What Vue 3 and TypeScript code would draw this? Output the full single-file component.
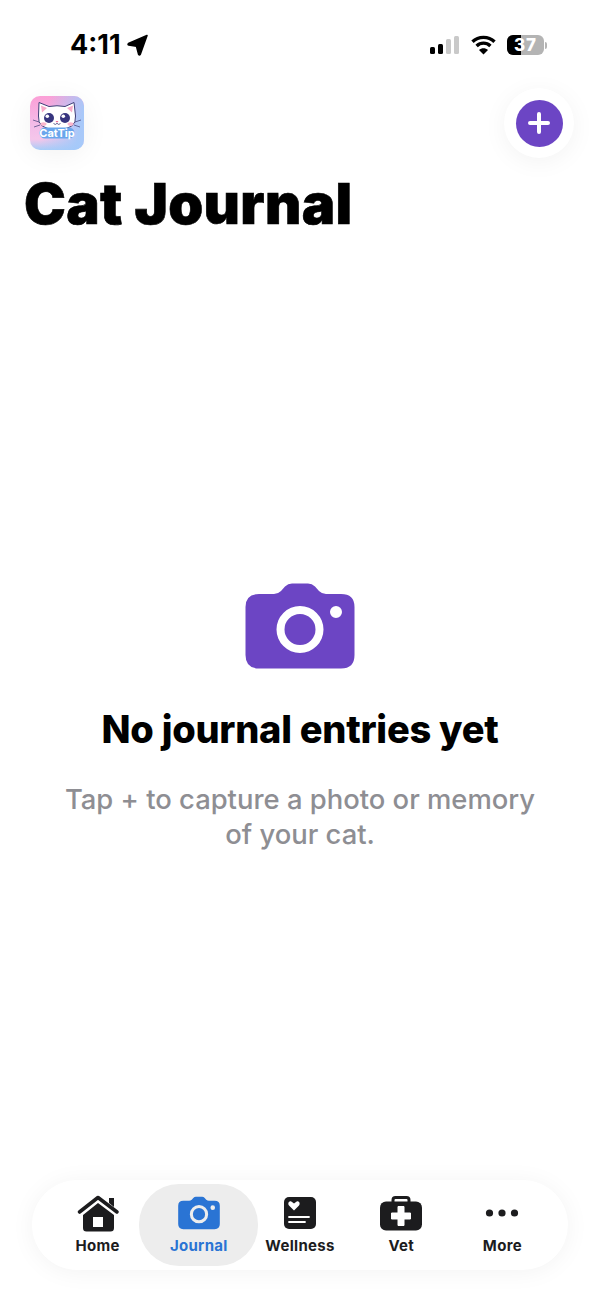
<script setup lang="ts">
const tabs = [
  { key: 'home', label: 'Home' },
  { key: 'journal', label: 'Journal' },
  { key: 'wellness', label: 'Wellness' },
  { key: 'vet', label: 'Vet' },
  { key: 'more', label: 'More' },
]
const active = 'journal'
</script>

<template>
  <div class="screen">
    <div class="status">
      <div class="time">
        <span>4:11</span>
        <svg width="23" height="22" viewBox="0 0 22 22"><path d="M20.5 1.5 L2 9.6 Q1 10.4 2.2 10.9 L10 12.2 L12.2 20.5 Q13 21.4 13.7 20.4 Z" fill="#000" stroke="#000" stroke-width="1.6" stroke-linejoin="round" /></svg>
      </div>
      <div class="status-right">
        <svg width="29" height="18" viewBox="0 0 29 18">
          <rect x="0" y="11" width="5" height="7" rx="1.500" fill="#000" />
          <rect x="8" y="8" width="5" height="10" rx="1.500" fill="#000" />
          <rect x="16" y="3" width="5" height="15" rx="1.500" fill="#c9c9c9" />
          <rect x="24" y="0" width="5" height="18" rx="1.500" fill="#c9c9c9" />
        </svg>
        <svg width="25" height="20" viewBox="0 0 25 20" fill="none" stroke="#000" stroke-width="3.400">
          <path d="M1.500 6.800 C7.500 .9 17.500 .9 23.500 6.800" />
          <path d="M5.600 11 C9.600 7.200 15.400 7.200 19.400 11" />
          <path d="M12.500 19.500 L8 15 C10.500 12.800 14.500 12.800 17 15 Z" fill="#000" stroke="none" />
        </svg>
        <div class="battery">
          <div class="battery-fill"></div>
          <span>37</span>
        </div>
        <div class="battery-cap"></div>
      </div>
    </div>

    <header class="top">
      <div class="logo-wrap">
        <svg class="logo" width="54" height="54" viewBox="0 0 54 54">
          <defs>
            <linearGradient id="logoBg" x1="0" y1="0" x2="0" y2="1">
              <stop offset="0" stop-color="#fb9fd6" />
              <stop offset="0.55" stop-color="#f3bde9" />
              <stop offset="0.8" stop-color="#f5c6ea" />
              <stop offset="1" stop-color="#a6cdf8" />
            </linearGradient>
            <linearGradient id="logoSide" x1="0" y1="0" x2="1" y2="0.200">
              <stop offset="0.35" stop-color="#a4c9fa" stop-opacity="0" />
              <stop offset="1" stop-color="#a4c9fa" stop-opacity=".95" />
            </linearGradient>
          </defs>
          <rect width="54" height="54" rx="10" fill="url(#logoBg)" />
          <rect width="54" height="54" rx="10" fill="url(#logoSide)" />
          <path d="M9 6.500 L19 10.500 Q27 9 35 10.500 L44 6.500 L45.500 20 Q47 33.500 27 33.500 Q7 33.500 8.500 20 Z" fill="#fff" stroke="#3f3f78" stroke-width="1" stroke-linejoin="round" />
          <path d="M11 9.500 L17 12 L12 16.500 Z M43 9.500 L37 12 L42 16.500 Z" fill="#f9aac8" />
          <circle cx="19" cy="22" r="5" fill="#37357f" />
          <circle cx="35" cy="22" r="5" fill="#37357f" />
          <circle cx="17.300" cy="20.300" r="1.800" fill="#fff" />
          <circle cx="33.300" cy="20.300" r="1.800" fill="#fff" />
          <ellipse cx="13.500" cy="28" rx="3" ry="1.800" fill="#fbb4cc" />
          <ellipse cx="40.500" cy="28" rx="3" ry="1.800" fill="#fbb4cc" />
          <path d="M25.500 25 H28.500 L27 26.800 Z" fill="#f0648f" />
          <path d="M23.500 27.500 Q25.500 29.500 27 27.300 Q28.500 29.500 30.500 27.500" fill="none" stroke="#3f3f78" stroke-width=".8" />
          <path d="M3 24 L9 26 M4 31 L10 29 M51 24 L45 26 M50 31 L44 29" stroke="#3f3f78" stroke-width=".7" />
          <rect x="9.500" y="31.500" width="35" height="11" rx="5.500" fill="#6aa6ec" />
          <text x="27" y="41" text-anchor="middle" class="logo-text">CatTip</text>
        </svg>
      </div>
      <button class="add" aria-label="Add entry">
        <span class="add-inner">
          <svg width="24" height="24" viewBox="0 0 24 24"><path d="M12 3 V21 M3 12 H21" stroke="#fff" stroke-width="4" stroke-linecap="round" /></svg>
        </span>
      </button>
    </header>

    <h1 class="title">Cat Journal</h1>

    <main class="empty">
      <svg class="empty-icon" width="110" height="86" viewBox="0 0 110 86">
        <path fill="#6c45c4" fill-rule="evenodd" d="M14 11 H29 Q33 11 36 8 L40 3.500 Q43 .5 47 .5 H63 Q67 .5 70 3.500 L74 8 Q77 11 81 11 H96 Q109.500 11 109.500 24 V72 Q109.500 85.500 96 85.500 H14 Q.5 85.500 .5 72 V24 Q.5 11 14 11 Z M55 23 A23.500 23.500 0 1 0 55 70 A23.500 23.500 0 1 0 55 23 Z M55 31 A15.500 15.500 0 1 1 55 62 A15.500 15.500 0 1 1 55 31 Z M91 23 A6 6 0 1 0 91 35 A6 6 0 1 0 91 23 Z" />
      </svg>
      <h2 class="empty-title">No journal entries yet</h2>
      <p class="empty-text">Tap + to capture a photo or memory of your cat.</p>
    </main>

    <nav class="tabbar">
      <div v-for="tab in tabs" :key="tab.key" class="tab" :class="{ on: tab.key === active }">
        <svg v-if="tab.key === 'home'" width="44" height="38" viewBox="0 0 44 38">
          <path d="M3.500 18 L22 3.500 L41 18" fill="none" stroke="#1c1c1e" stroke-width="3.600" stroke-linecap="round" stroke-linejoin="round" />
          <path d="M33 4 H38 V13 L33 9 Z" fill="#1c1c1e" />
          <path fill="#1c1c1e" fill-rule="evenodd" d="M22 9 L38 21 V34 Q38 37.500 34.500 37.500 H10.500 Q7 37.500 7 34 V21 Z M17 23 V33 H27 V23 Z" />
        </svg>
        <svg v-else-if="tab.key === 'journal'" width="42" height="34" viewBox="0 0 110 86">
          <path fill="#2a74d4" fill-rule="evenodd" d="M14 11 H29 Q33 11 36 8 L40 3.500 Q43 .5 47 .5 H63 Q67 .5 70 3.500 L74 8 Q77 11 81 11 H96 Q109.500 11 109.500 24 V72 Q109.500 85.500 96 85.500 H14 Q.5 85.500 .5 72 V24 Q.5 11 14 11 Z M55 22 A24 24 0 1 0 55 70 A24 24 0 1 0 55 22 Z M55 30 A16 16 0 1 1 55 62 A16 16 0 1 1 55 30 Z M91 23 A6 6 0 1 0 91 35 A6 6 0 1 0 91 23 Z" />
        </svg>
        <svg v-else-if="tab.key === 'wellness'" width="32" height="32" viewBox="0 0 32 32">
          <rect width="32" height="32" rx="5" fill="#1c1c1e" />
          <path d="M10 13.500 L5 8.500 C3 6 6 3 8 5 L10 6.500 L12 5 C14 3 17 6 15 8.500 Z" fill="#fff" />
          <path d="M5 20 H25 M5 25 H21" stroke="#fff" stroke-width="1.800" stroke-linecap="round" />
        </svg>
        <svg v-else-if="tab.key === 'vet'" width="42" height="35" viewBox="0 0 42 35">
          <path d="M13 7 V4.500 Q13 2 15.500 2 H26.500 Q29 2 29 4.500 V7" fill="none" stroke="#1c1c1e" stroke-width="3" />
          <rect y="6" width="42" height="29" rx="6" fill="#1c1c1e" />
          <path d="M18 11 H24 V17.500 H30.500 V23.500 H24 V30 H18 V23.500 H11.500 V17.500 H18 Z" fill="#fff" stroke="#fff" stroke-linejoin="round" />
        </svg>
        <svg v-else width="34" height="34" viewBox="0 0 34 34">
          <circle cx="4.500" cy="17" r="3.600" fill="#1c1c1e" />
          <circle cx="17" cy="17" r="3.600" fill="#1c1c1e" />
          <circle cx="29.500" cy="17" r="3.600" fill="#1c1c1e" />
        </svg>
        <span class="tab-label">{{ tab.label }}</span>
      </div>
    </nav>
  </div>
</template>

<style>
html, body { margin: 0; background: #fff; }
</style>

<style scoped>
.screen {
  width: 600px;
  height: 1299px;
  display: flex;
  flex-direction: column;
  overflow: hidden;
  background: #fff;
  color: #000;
  font-family: Inter, "Liberation Sans", sans-serif;
}
.status {
  height: 90px;
  box-sizing: border-box;
  padding: 30px 53px 0 70px;
  display: flex;
  justify-content: space-between;
  align-items: flex-start;
}
.time {
  display: flex;
  align-items: center;
  gap: 5px;
  font-size: 27px;
  line-height: 30px;
  font-weight: 700;
}
.status-right {
  display: flex;
  align-items: center;
  height: 30px;
}
.status-right svg:first-child { margin-right: 12px; }
.status-right svg:nth-child(2) { margin-right: 11px; }
.battery {
  position: relative;
  width: 37px;
  height: 20px;
  border-radius: 6px;
  background: #b4b4b4;
  overflow: hidden;
  text-align: center;
  color: #fff;
  font-size: 17px;
  line-height: 20px;
  font-weight: 800;
  letter-spacing: 1px;
}
.battery-fill {
  position: absolute;
  left: 0;
  top: 0;
  bottom: 0;
  width: 14px;
  background: #000;
}
.battery span { position: relative; }
.battery-cap {
  width: 2px;
  height: 7px;
  margin-left: 1px;
  border-radius: 0 2px 2px 0;
  background: #b4b4b4;
}
.top {
  height: 66px;
  padding: 0 38px 0 30px;
  display: flex;
  justify-content: space-between;
  align-items: center;
}
.logo-wrap {
  border-radius: 16px;
  background: #fff;
  box-shadow: 0 4px 28px rgba(0, 0, 0, 0.06);
  display: flex;
}
.add {
  width: 70px;
  height: 70px;
  margin-right: -12px;
  padding: 0;
  border: 0;
  border-radius: 50%;
  background: #fff;
  box-shadow: 0 4px 24px rgba(0, 0, 0, 0.05);
  display: flex;
  align-items: center;
  justify-content: center;
}
.add-inner {
  width: 47px;
  height: 47px;
  border-radius: 50%;
  background: #6c45c4;
  display: flex;
  align-items: center;
  justify-content: center;
}
.logo-text {
  fill: #fff;
  font-family: Inter, "Liberation Sans", sans-serif;
  font-size: 11px;
  font-weight: 700;
}
.title {
  margin: 18px 0 0 24px;
  font-size: 56px;
  line-height: 60px;
  font-weight: 900;
  letter-spacing: 0.4px;
  -webkit-text-stroke: 0.6px #000;
}
.empty {
  flex: 1;
  display: flex;
  flex-direction: column;
  align-items: center;
  padding-top: 349px;
}
.empty-title {
  margin: 37px 0 0;
  font-size: 38px;
  line-height: 46px;
  font-weight: 800;
  letter-spacing: -0.25px;
}
.empty-text {
  width: 500px;
  margin: 30px 0 0;
  text-align: center;
  font-size: 27.400px;
  line-height: 35px;
  font-weight: 500;
  color: #8e8e93;
}
.tabbar {
  width: 536px;
  height: 90px;
  box-sizing: border-box;
  margin: 0 32px 29px;
  padding: 4px 15px;
  border-radius: 45px;
  background: #fff;
  box-shadow: 0 2px 24px rgba(0, 0, 0, 0.05);
  display: grid;
  grid-template-columns: repeat(5, 1fr);
}
.tab {
  display: flex;
  flex-direction: column;
  align-items: center;
  border-radius: 40px;
}
.tab svg { height: 38px; margin-top: 10px; flex: none; }
.tab.on {
  margin: 0 -9px;
  background: #ededed;
  color: #2a74d4;
}
.tab-label {
  margin-top: 4px;
  font-size: 15px;
  line-height: 20px;
  font-weight: 700;
  letter-spacing: 0.3px;
  color: #1c1c1e;
}
.tab.on .tab-label { color: #2a74d4; }
</style>
